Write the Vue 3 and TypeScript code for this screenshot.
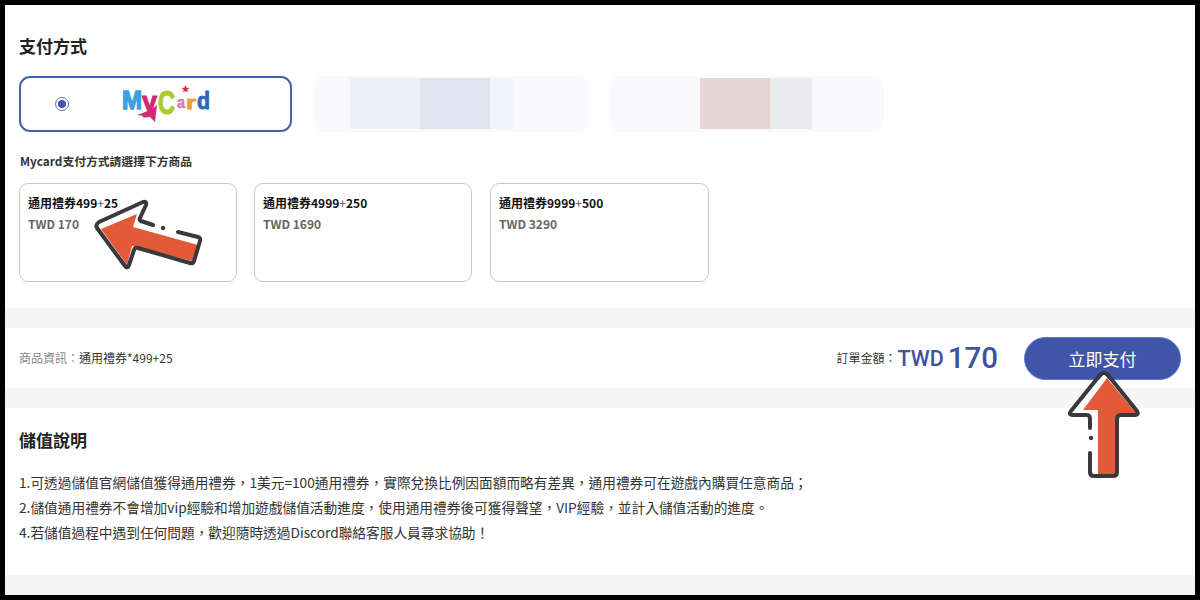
<script setup lang="ts">
const cards = [
  { title: '通用禮券499', bonus: '25', price: 'TWD 170' },
  { title: '通用禮券4999', bonus: '250', price: 'TWD 1690' },
  { title: '通用禮券9999', bonus: '500', price: 'TWD 3290' },
]
const notes = [
  '1.可透過儲值官網儲值獲得通用禮券，1美元=100通用禮券，實際兌換比例因面額而略有差異，通用禮券可在遊戲內購買任意商品；',
  '2.儲值通用禮券不會增加vip經驗和增加遊戲儲值活動進度，使用通用禮券後可獲得聲望，VIP經驗，並計入儲值活動的進度。',
  '4.若儲值過程中遇到任何問題，歡迎隨時透過Discord聯絡客服人員尋求協助！',
]
</script>

<template>
  <div class="frame">
    <div class="page">
      <section class="pay">
        <h2 class="title">支付方式</h2>
        <div class="methods">
          <div class="method selected">
            <span class="radio"><span class="dot"></span></span>
            <svg class="logo" viewBox="0 0 91 40" width="91" height="40">
              <text x="1" y="25" font-size="25" textLength="20" lengthAdjust="spacingAndGlyphs" fill="#3f9fdc" stroke="#3f9fdc" stroke-width="1.4">M</text>
              <text x="21" y="27" font-size="28" textLength="15" lengthAdjust="spacingAndGlyphs" fill="#cf2a72" stroke="#cf2a72" stroke-width="1.2">y</text>
              <polygon points="16,31 30,26 36,21 34,38 29,33 24,32" fill="#cf2a72" />
              <text x="37" y="30" font-size="33" textLength="17" lengthAdjust="spacingAndGlyphs" fill="#a9cb2e" stroke="#a9cb2e" stroke-width="1.2">C</text>
              <text x="56" y="24" font-size="16" textLength="8" lengthAdjust="spacingAndGlyphs" fill="#d67ab0" stroke="#d67ab0" stroke-width="0.6">a</text>
              <text x="65" y="25" font-size="19" textLength="10" lengthAdjust="spacingAndGlyphs" fill="#e9a23a" stroke="#e9a23a" stroke-width="0.8">r</text>
              <text x="76" y="25" font-size="24" textLength="13" lengthAdjust="spacingAndGlyphs" fill="#2c68b8" stroke="#2c68b8" stroke-width="0.9">d</text>
              <polygon points="64.5,1 65.6,3.7 68.5,3.9 66.2,5.7 67,8.5 64.5,7 62,8.5 62.8,5.7 60.5,3.9 63.4,3.7" fill="#d0343c" />
            </svg>
          </div>
          <div class="method ghost first">
            <span class="b1 a"></span><span class="b2 a"></span><span class="b3 a"></span>
          </div>
          <div class="method ghost second">
            <span class="b1 p"></span><span class="b2 p"></span>
          </div>
        </div>
        <p class="hint">Mycard支付方式請選擇下方商品</p>
        <div class="products">
          <div v-for="c in cards" :key="c.title" class="product">
            <div class="p-name">{{ c.title }}<span class="plus">+</span>{{ c.bonus }}</div>
            <div class="p-price">{{ c.price }}</div>
          </div>
        </div>
      </section>
      <section class="summary">
        <div class="info"><span class="muted">商品資訊：</span>通用禮券*499+25</div>
        <div class="right">
          <span class="label">訂單金額：</span>
          <span class="cur">TWD</span>
          <span class="amt">170</span>
          <button class="btn">立即支付</button>
        </div>
      </section>
      <section class="notes">
        <h2 class="title">儲值說明</h2>
        <p v-for="n in notes" :key="n" class="note">{{ n }}</p>
      </section>
    </div>

    <svg class="overlay" viewBox="0 0 1200 600" width="1200" height="600">
      <g stroke-linecap="round" stroke-linejoin="round">
        <path d="M97 225 L147 202 L140 222 L200 240 L193 262 L135 248 L128 268 Z" fill="#fff" />
        <path d="M101 229 L137 214 L133 227 L198 245 L192 261 L132 246 L127 265 Z" fill="#e25a38" />
        <path d="M153 225 L141 221 Q139 220 140 218 L146 205 Q147 201 143 202 L99 222 Q95 225 97 228 L125 266 Q128 269 129 265 L134 250 Q135 247 138 248 L190 263 Q193 264 194 261 L200 241 Q201 238 198 237 L178 232" fill="none" stroke="#37393b" stroke-width="4" />
        <circle cx="163" cy="228" r="2.2" fill="#37393b" />

        <path d="M1104 374 L1137 414 L1117 415 L1117 476 L1090 476 L1090 415 L1070 414 Z" fill="#fff" />
        <path d="M1107 378 L1137 414 L1117 415 L1117 475 L1098 475 L1098 410 L1083 410 Z" fill="#e25a38" />
        <path d="M1090 453 L1090 472 Q1090 476 1094 476 L1113 476 Q1117 476 1117 472 L1117 419 Q1117 415 1121 415 L1135 415 Q1139 415 1137 411 L1108 375 Q1104 371 1100 375 L1071 411 Q1068 415 1073 415 L1087 415 Q1090 415 1090 419 L1090 428" fill="none" stroke="#37393b" stroke-width="4" />
        <circle cx="1091" cy="438" r="2.2" fill="#37393b" />
      </g>
    </svg>
  </div>
</template>

<style>
body { margin: 0; }
</style>

<style scoped>
.frame {
  position: relative;
  width: 1200px;
  height: 600px;
  box-sizing: border-box;
  padding: 5px;
  background: #000;
  overflow: hidden;
  font-family: "Noto Sans CJK TC", "Noto Sans", sans-serif;
}
.page {
  height: 590px;
  background: #f5f5f5;
  display: flex;
  flex-direction: column;
  gap: 20px;
}
section { background: #fff; padding: 0 14px; }
.pay { height: 303px; box-sizing: border-box; padding-top: 29px; }
.title {
  margin: 0;
  font-size: 17px;
  line-height: 24px;
  font-weight: 700;
  color: #222;
}
.methods { display: flex; gap: 22px; margin-top: 18px; }
.method {
  box-sizing: border-box;
  height: 56px;
  border-radius: 11px;
  display: flex;
  align-items: center;
}
.selected { width: 273px; border: 2px solid #4a62a8; background: #fff; }
.ghost { background: #f9f9fd; align-items: stretch; padding-top: 2px; padding-bottom: 3px; }
.first { width: 275px; padding-left: 36px; }
.second { width: 274px; margin-left: -1px; padding-left: 90px; }
.b1, .b2, .b3 { display: block; height: 100%; }
.b1.a { width: 70px; background: #eff0f5; }
.b2.a { width: 70px; background: #e0e4f0; }
.b3.a { width: 23px; background: #f2f4fc; }
.b1.p { width: 70px; background: #e8d5d6; }
.b2.p { width: 42px; background: #eaeaef; }
.radio {
  box-sizing: border-box;
  width: 14px;
  height: 14px;
  margin-left: 34px;
  border: 1.5px solid #5a6fc0;
  border-radius: 50%;
  display: flex;
  align-items: center;
  justify-content: center;
}
.dot { width: 8px; height: 8px; border-radius: 50%; background: #4353ae; }
.logo {
  margin-left: 52px;
  font-family: "Liberation Sans", sans-serif;
  font-weight: 700;
}
.hint {
  margin: 21px 0 0 1px;
  font-size: 11.8px;
  line-height: 16px;
  font-weight: 700;
  color: #333;
}
.products { display: flex; gap: 17px; margin-top: 14px; }
.product {
  box-sizing: border-box;
  width: 218px;
  height: 99px;
  padding: 10px 8px;
  border: 1px solid #c9c9c9;
  border-radius: 9px;
  background: #fff;
}
.product:last-child { margin-left: 1px; width: 219px; }
.p-name { font-size: 12px; line-height: 18px; font-weight: 700; color: #111; }
.plus { color: #555; font-weight: 400; }
.p-price { margin-top: 3px; font-size: 12px; line-height: 18px; font-weight: 700; color: #666; }
.summary {
  height: 60px;
  display: flex;
  align-items: center;
  justify-content: space-between;
}
.info { font-size: 12px; color: #333; margin-bottom: 2px; }
.muted { color: #888; }
.right { display: flex; align-items: center; }
.label { font-size: 12px; color: #333; margin-bottom: 2px; margin-right: 1px; }
.cur { font-size: 21.5px; font-weight: 500; color: #3f51a3; font-family: Roboto, sans-serif; }
.amt { margin-left: 4px; font-size: 29.5px; font-weight: 500; color: #3f51a3; font-family: Roboto, sans-serif; line-height: 40px; }
.btn {
  width: 157px;
  height: 43px;
  margin-left: 26px;
  border: 1px solid #5a78d0;
  border-radius: 22px;
  background: #3f55a8;
  color: #fff;
  font: 400 17px "Noto Sans CJK TC", sans-serif;
}
.notes { height: 167px; box-sizing: border-box; padding-top: 20px; }
.note { margin: 0; font-size: 13.7px; line-height: 25px; color: #333; }
.notes .title { margin-bottom: 18px; }
.overlay { position: absolute; left: 0; top: 0; pointer-events: none; }
</style>
